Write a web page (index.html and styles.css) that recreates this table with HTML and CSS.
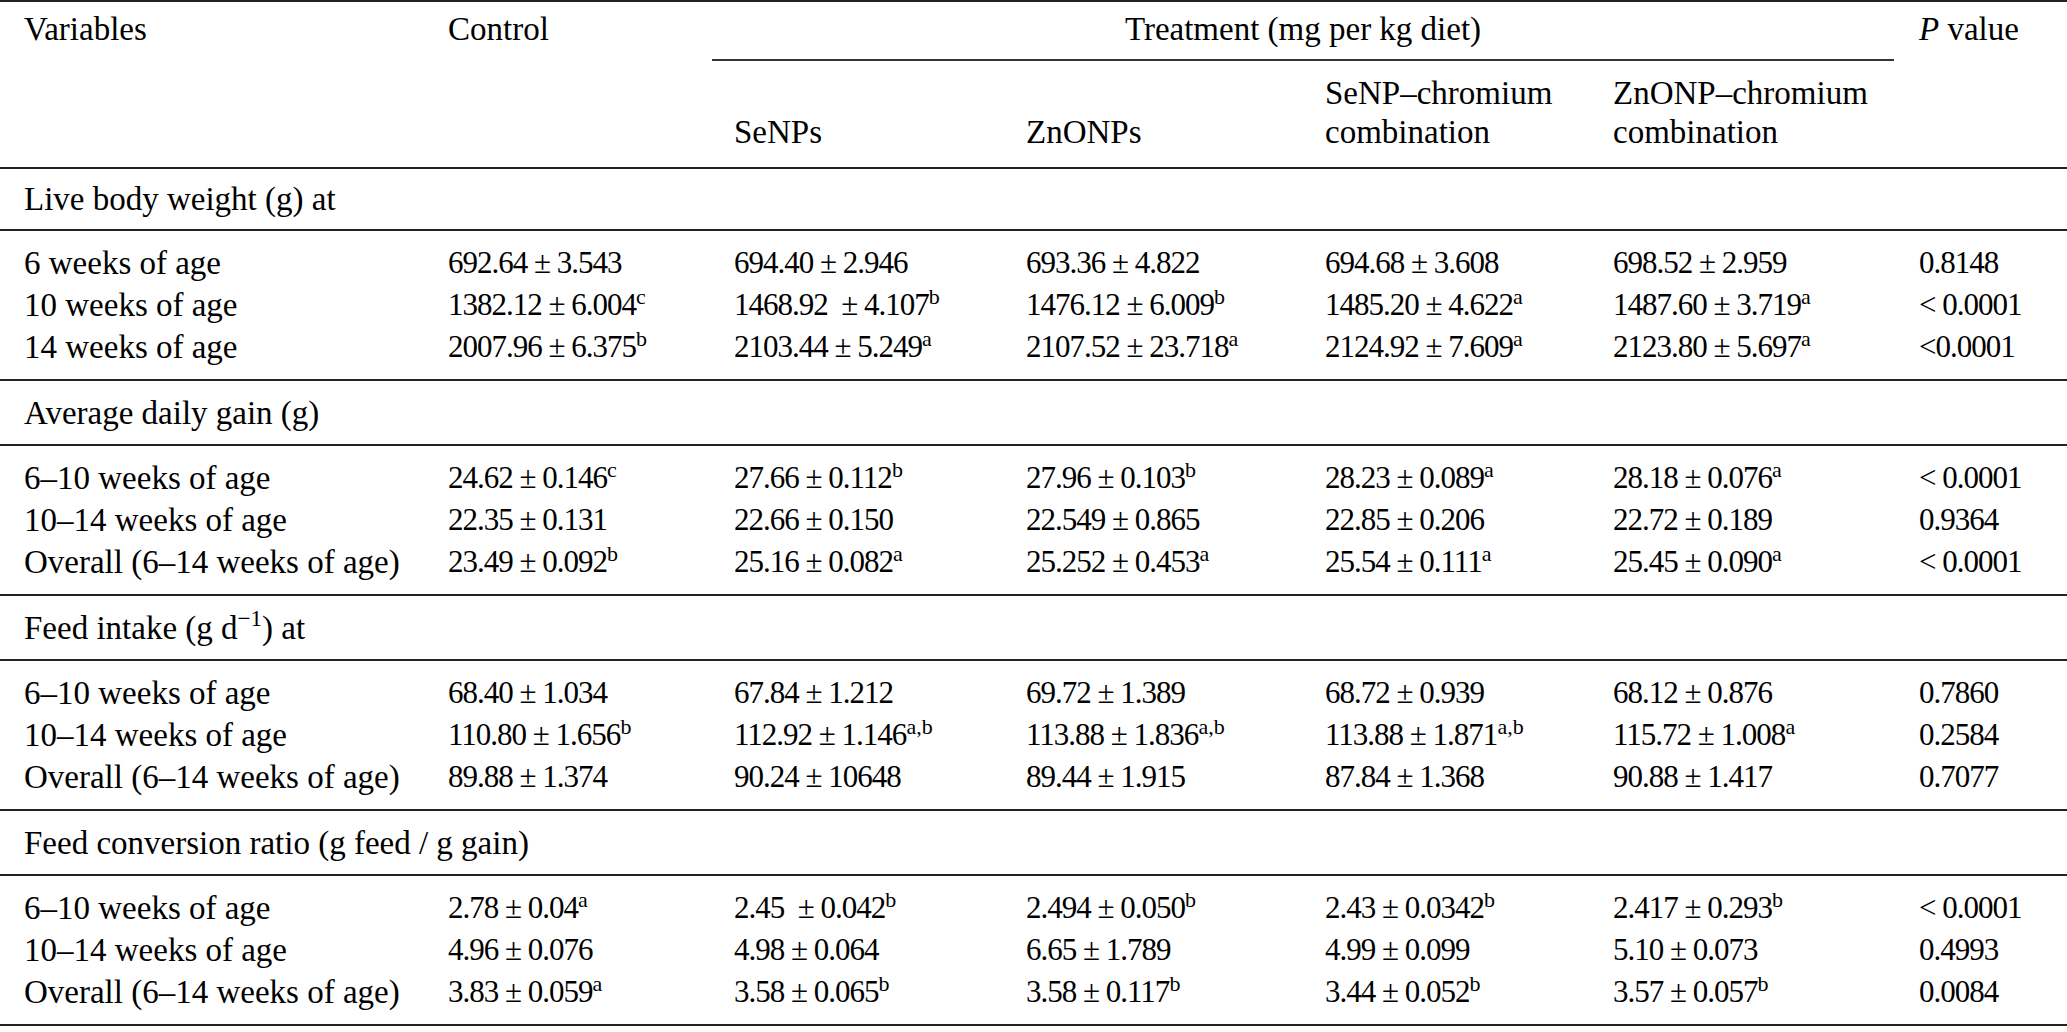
FILE: index.html
```html
<!DOCTYPE html>
<html lang="en">
<head>
<meta charset="utf-8">
<title>Growth performance table</title>
<link rel="stylesheet" href="styles.css">
</head>
<body>
<div class="table">
  <div class="head">
    <div class="h-var">Variables</div>
    <div class="h-ctrl">Control</div>
    <div class="h-treat">Treatment (mg per kg diet)</div>
    <div class="h-p"><i>P</i> value</div>
    <div class="h-sub c3">SeNPs</div>
    <div class="h-sub c4">ZnONPs</div>
    <div class="h-sub c5">SeNP–chromium<br>combination</div>
    <div class="h-sub c6">ZnONP–chromium<br>combination</div>
  </div>

  <div class="section first">Live body weight (g) at</div>
  <div class="block">
    <div>6 weeks of age</div><div>692.64 ± 3.543</div><div>694.40 ± 2.946</div><div>693.36 ± 4.822</div><div>694.68 ± 3.608</div><div>698.52 ± 2.959</div><div>0.8148</div>
    <div>10 weeks of age</div><div>1382.12 ± 6.004<sup>c</sup></div><div>1468.92&nbsp; ± 4.107<sup>b</sup></div><div>1476.12 ± 6.009<sup>b</sup></div><div>1485.20 ± 4.622<sup>a</sup></div><div>1487.60 ± 3.719<sup>a</sup></div><div>&lt; 0.0001</div>
    <div>14 weeks of age</div><div>2007.96 ± 6.375<sup>b</sup></div><div>2103.44 ± 5.249<sup>a</sup></div><div>2107.52 ± 23.718<sup>a</sup></div><div>2124.92 ± 7.609<sup>a</sup></div><div>2123.80 ± 5.697<sup>a</sup></div><div>&lt;0.0001</div>
  </div>

  <div class="section">Average daily gain (g)</div>
  <div class="block">
    <div>6–10 weeks of age</div><div>24.62 ± 0.146<sup>c</sup></div><div>27.66 ± 0.112<sup>b</sup></div><div>27.96 ± 0.103<sup>b</sup></div><div>28.23 ± 0.089<sup>a</sup></div><div>28.18 ± 0.076<sup>a</sup></div><div>&lt; 0.0001</div>
    <div>10–14 weeks of age</div><div>22.35 ± 0.131</div><div>22.66 ± 0.150</div><div>22.549 ± 0.865</div><div>22.85 ± 0.206</div><div>22.72 ± 0.189</div><div>0.9364</div>
    <div>Overall (6–14 weeks of age)</div><div>23.49 ± 0.092<sup>b</sup></div><div>25.16 ± 0.082<sup>a</sup></div><div>25.252 ± 0.453<sup>a</sup></div><div>25.54 ± 0.111<sup>a</sup></div><div>25.45 ± 0.090<sup>a</sup></div><div>&lt; 0.0001</div>
  </div>

  <div class="section">Feed intake (g d<sup class="exp">−1</sup>) at</div>
  <div class="block">
    <div>6–10 weeks of age</div><div>68.40 ± 1.034</div><div>67.84 ± 1.212</div><div>69.72 ± 1.389</div><div>68.72 ± 0.939</div><div>68.12 ± 0.876</div><div>0.7860</div>
    <div>10–14 weeks of age</div><div>110.80 ± 1.656<sup>b</sup></div><div>112.92 ± 1.146<sup>a,b</sup></div><div>113.88 ± 1.836<sup>a,b</sup></div><div>113.88 ± 1.871<sup>a,b</sup></div><div>115.72 ± 1.008<sup>a</sup></div><div>0.2584</div>
    <div>Overall (6–14 weeks of age)</div><div>89.88 ± 1.374</div><div>90.24 ± 10648</div><div>89.44 ± 1.915</div><div>87.84 ± 1.368</div><div>90.88 ± 1.417</div><div>0.7077</div>
  </div>

  <div class="section">Feed conversion ratio (g feed / g gain)</div>
  <div class="block last">
    <div>6–10 weeks of age</div><div>2.78 ± 0.04<sup>a</sup></div><div>2.45&nbsp; ± 0.042<sup>b</sup></div><div>2.494 ± 0.050<sup>b</sup></div><div>2.43 ± 0.0342<sup>b</sup></div><div>2.417 ± 0.293<sup>b</sup></div><div>&lt; 0.0001</div>
    <div>10–14 weeks of age</div><div>4.96 ± 0.076</div><div>4.98 ± 0.064</div><div>6.65 ± 1.789</div><div>4.99 ± 0.099</div><div>5.10 ± 0.073</div><div>0.4993</div>
    <div>Overall (6–14 weeks of age)</div><div>3.83 ± 0.059<sup>a</sup></div><div>3.58 ± 0.065<sup>b</sup></div><div>3.58 ± 0.117<sup>b</sup></div><div>3.44 ± 0.052<sup>b</sup></div><div>3.57 ± 0.057<sup>b</sup></div><div>0.0084</div>
  </div>
</div>
</body>
</html>
```
FILE: styles.css
```css
html, body {
  margin: 0;
  padding: 0;
  background: #fff;
}

body {
  font-family: "Liberation Serif", "Times New Roman", serif;
  font-size: 33px;
  color: #000;
}

.table {
  width: 2067px;
  border-top: 2px solid #222;
  border-bottom: 2px solid #222;
}

.head,
.block {
  display: grid;
  grid-template-columns: 424px 286px 292px 299px 288px 306px 1fr;
  padding-left: 24px;
  white-space: nowrap;
}

.head {
  padding-top: 6px;
  padding-bottom: 15px;
  row-gap: 13px;
  border-bottom: 2px solid #222;
  line-height: 42px;
}

.h-var { grid-column: 1; grid-row: 1; }
.h-ctrl { grid-column: 2; grid-row: 1; }
.h-p { grid-column: 7; grid-row: 1; }

.h-treat {
  grid-column: 3 / 7;
  grid-row: 1;
  text-align: center;
  margin: 0 25px 0 -22px;
  padding-bottom: 9px;
  border-bottom: 2px solid #333;
}

.h-sub {
  grid-row: 2;
  align-self: end;
  line-height: 39px;
}
.c3 { grid-column: 3; }
.c4 { grid-column: 4; }
.c5 { grid-column: 5; }
.c6 { grid-column: 6; }

.section {
  padding: 10.5px 24px;
  line-height: 42px;
  border-bottom: 2px solid #222;
}

.section.first {
  padding-top: 9px;
  padding-bottom: 9px;
}

.block {
  padding-top: 11px;
  padding-bottom: 11px;
  line-height: 42px;
  border-bottom: 2px solid #222;
}

.block.last {
  border-bottom: none;
}

.block > div:not(:nth-child(7n+1)) {
  font-size: 31px;
  letter-spacing: -1px;
}

sup {
  font-size: 22px;
  line-height: 0;
  letter-spacing: 0;
  vertical-align: 11px;
}

sup.exp {
  font-size: 23px;
  vertical-align: 13px;
}
```
